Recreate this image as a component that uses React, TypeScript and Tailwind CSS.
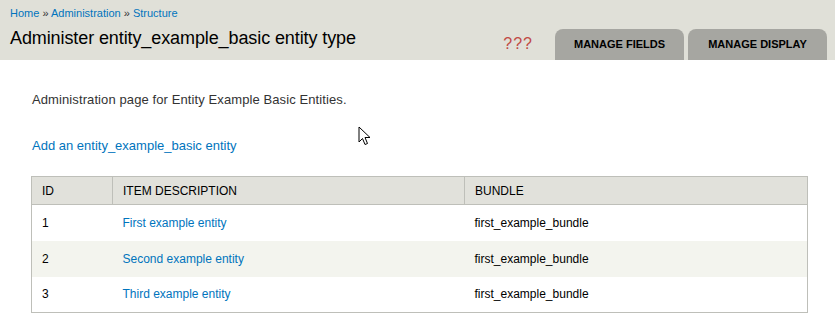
import React from 'react';

const rows = [
  { id: 1, label: 'First example entity', bundle: 'first_example_bundle' },
  { id: 2, label: 'Second example entity', bundle: 'first_example_bundle' },
  { id: 3, label: 'Third example entity', bundle: 'first_example_bundle' },
];

export default function App() {
  return (
    <div className="relative min-h-[332px] bg-white font-['Liberation_Sans',Arial,sans-serif] text-black">
      {/* Header */}
      <div className="flex h-[60px] justify-between bg-[#e0e0d8] pl-[10px] pr-[8px]">
        <div className="pt-[6px]">
          <div className="text-[11px] leading-[14px] text-[#0074bd]">
            <a href="#">Home</a> <span className="text-[#333]">»</span> <a href="#">Administration</a>{' '}
            <span className="text-[#333]">»</span> <a href="#">Structure</a>
          </div>
          <h1 className="mt-[7px] text-[18px] leading-[22px] tracking-[-0.1px]">Administer entity_example_basic entity type</h1>
        </div>
        <div className="flex items-end">
          <span className="mb-[4px] mr-[22px] text-[16px] tracking-[1px] text-[#c04a45]">???</span>
          <div className="flex gap-[4px]">
            <a href="#" className="flex h-[31px] w-[129px] items-center justify-center rounded-t-[8px] bg-[#a6a6a1] text-[11px] font-bold">
              MANAGE FIELDS
            </a>
            <a href="#" className="flex h-[31px] w-[139px] items-center justify-center rounded-t-[8px] bg-[#a6a6a1] text-[11px] font-bold">
              MANAGE DISPLAY
            </a>
          </div>
        </div>
      </div>

      {/* Content */}
      <div className="pl-[31px] pr-[27px]">
        <p className="ml-[1px] mt-[32px] text-[13px] leading-[16px] tracking-[0.1px] text-[#333]">
          Administration page for Entity Example Basic Entities.
        </p>
        <a href="#" className="ml-[1px] mt-[30px] block text-[13px] leading-[16px] text-[#0074bd]">
          Add an entity_example_basic entity
        </a>
        <table className="mt-[22px] w-full border border-[#bebfb9] text-[12px]">
          <thead>
            <tr className="h-[28px] border-b border-[#bebfb9] bg-[#e1e1db] text-left">
              <th className="w-[81px] border-r border-[#bebfb9] pl-[10px] font-normal">ID</th>
              <th className="w-[352px] border-r border-[#bebfb9] pl-[10px] font-normal">ITEM DESCRIPTION</th>
              <th className="pl-[10px] font-normal">BUNDLE</th>
            </tr>
          </thead>
          <tbody>
            {rows.map((row, i) => (
              <tr key={row.id} className={`h-[36px] ${i % 2 === 1 ? 'bg-[#f3f4ee]' : 'bg-white'}`}>
                <td className="pl-[10px]">{row.id}</td>
                <td className="pl-[10px]">
                  <a href="#" className="text-[#0074bd]">{row.label}</a>
                </td>
                <td className="pl-[10px]">{row.bundle}</td>
              </tr>
            ))}
          </tbody>
        </table>
      </div>

      {/* mouse pointer */}
      <svg className="absolute left-[358px] top-[126px]" width="14" height="20" viewBox="0 0 14 20">
        <path d="M1 1 L1 16 L4.5 12.5 L7 18.5 L9.5 17.5 L7 11.5 L12 11.5 Z" fill="white" stroke="black" strokeWidth="1" strokeLinejoin="round" />
      </svg>
    </div>
  );
}
